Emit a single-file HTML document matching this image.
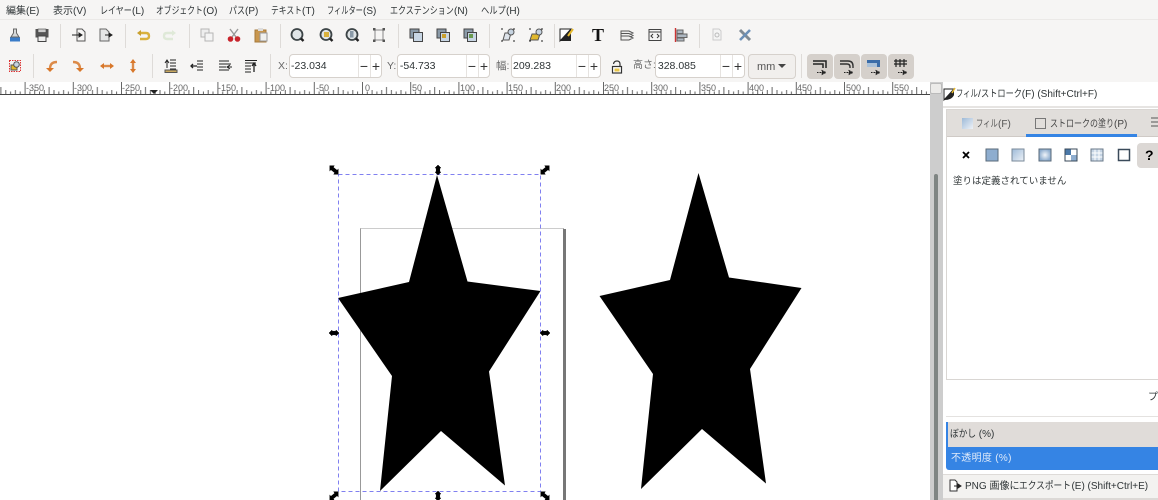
<!DOCTYPE html>
<html lang="ja"><head><meta charset="utf-8"><title>Inkscape</title>
<style>
html{background:#f6f5f4}
html,body{margin:0;padding:0;width:1158px;height:500px;overflow:hidden}
body{position:relative;background:#f6f5f4;font-family:"Liberation Sans","Noto Sans CJK JP",sans-serif;font-size:10px;color:#2e3436;filter:blur(.35px)}
.t{position:absolute;white-space:nowrap;line-height:14px}
.t s{display:inline-block;text-decoration:none;transform-origin:0 50%;white-space:nowrap;vertical-align:top}
.b{position:absolute;box-sizing:border-box}
.e{position:absolute;top:54px;height:24px;box-sizing:border-box;background:#fff;border:1px solid #d6d1cc;border-radius:4px;font-size:10.5px;line-height:23px;padding-left:1px;color:#2e3436}
.e i{position:absolute;top:0;bottom:0;width:1px;background:#e6e3e0}
.e b{position:absolute;top:0;font-weight:400;font-size:14px;width:12px;text-align:center;color:#333}
.tb{position:absolute;top:54px;width:26px;height:25px;background:#d5d0cb;border-radius:4px}
.l{font-size:10.5px;color:#666;top:59px}
.r{font-size:9px;color:#666;top:82px;line-height:12px}
svg{position:absolute;left:0;top:0}
</style></head><body>

<div class="t" style="left:6px;top:5px">編集(E)</div>
<div class="t" style="left:53px;top:5px">表示(V)</div>
<div class="t" style="left:100px;top:5px"><s style="width:32px;transform:scaleX(.8)">レイヤー</s>(L)</div>
<div class="t" style="left:156px;top:5px"><s style="width:47px;transform:scaleX(.78)">オブジェクト</s>(O)</div>
<div class="t" style="left:229px;top:5px"><s style="width:16px;transform:scaleX(.8)">パス</s>(P)</div>
<div class="t" style="left:271px;top:5px"><s style="width:31px;transform:scaleX(.78)">テキスト</s>(T)</div>
<div class="t" style="left:327px;top:5px"><s style="width:36px;transform:scaleX(.72)">フィルター</s>(S)</div>
<div class="t" style="left:390px;top:5px"><s style="width:64px;transform:scaleX(.8)">エクステンション</s>(N)</div>
<div class="t" style="left:481px;top:5px"><s style="width:25px;transform:scaleX(.83)">ヘルプ</s>(H)</div>
<div class="b" style="left:0;top:19px;width:1158px;height:1px;background:#ebe9e7"></div>

<div class="t l" style="left:278px">X:</div>
<div class="e" style="left:289px;width:93px">-23.034<i style="left:68px"></i><i style="left:80px"></i><b style="left:68px">−</b><b style="left:80px">+</b></div>
<div class="t l" style="left:387px">Y:</div>
<div class="e" style="left:397px;width:93px">&#8202;-54.733<i style="left:68px"></i><i style="left:80px"></i><b style="left:68px">−</b><b style="left:80px">+</b></div>
<div class="t l" style="left:496px">幅:</div>
<div class="e" style="left:511px;width:90px">209.283<i style="left:64px"></i><i style="left:76px"></i><b style="left:64px">−</b><b style="left:76px">+</b></div>
<div class="t l" style="left:633px;font-size:10px">高さ:</div>
<div class="e" style="left:655px;width:90px">&#8202;328.085<i style="left:64px"></i><i style="left:76px"></i><b style="left:64px">−</b><b style="left:76px">+</b></div>
<div class="b" style="left:748px;top:54px;width:48px;height:25px;background:#f1efed;border:1px solid #d6d1cc;border-radius:4px;font-size:11px;line-height:24px;padding-left:8px;color:#555">mm</div>
<div class="tb" style="left:807px"></div>
<div class="tb" style="left:834px"></div>
<div class="tb" style="left:861px"></div>
<div class="tb" style="left:888px"></div>

<!-- ruler -->
<div class="b" style="left:0;top:82px;width:930px;height:13px;background:#fff;overflow:hidden"></div>
<div class="t r" style="left:26px">-350</div>
<div class="t r" style="left:74px">-300</div>
<div class="t r" style="left:122px">-250</div>
<div class="t r" style="left:170px">-200</div>
<div class="t r" style="left:218px">-150</div>
<div class="t r" style="left:267px">-100</div>
<div class="t r" style="left:316px">-50</div>
<div class="t r" style="left:365px">0</div>
<div class="t r" style="left:412px">50</div>
<div class="t r" style="left:460px">100</div>
<div class="t r" style="left:508px">150</div>
<div class="t r" style="left:556px">200</div>
<div class="t r" style="left:604px">250</div>
<div class="t r" style="left:653px">300</div>
<div class="t r" style="left:701px">350</div>
<div class="t r" style="left:749px">400</div>
<div class="t r" style="left:797px">450</div>
<div class="t r" style="left:846px">500</div>
<div class="t r" style="left:894px">550</div>

<!-- canvas -->
<div class="b" style="left:0;top:95px;width:930px;height:405px;background:#fff"></div>
<!-- scrollbar -->
<div class="b" style="left:930px;top:82px;width:13px;height:418px;background:#cdcdcd"></div>
<div class="b" style="left:934px;top:174px;width:4px;height:326px;background:#7f8583;border-radius:2px 2px 0 0"></div>
<div class="b" style="left:930px;top:83px;width:12px;height:11px;background:#ecebe9;border:1px solid #bbb;border-radius:2px"></div>

<!-- panel -->
<div class="b" style="left:943px;top:82px;width:215px;height:418px;background:#fff"></div>
<div class="t" style="left:956px;top:88px;font-size:10px"><s style="width:22px;transform:scaleX(.73)">フィル</s>/<s style="width:41px;transform:scaleX(.82)">ストローク</s>(F) (Shift+Ctrl+F)</div>
<div class="b" style="left:943px;top:106px;width:215px;height:2px;background:#e6e4e2"></div>
<div class="b" style="left:946px;top:109px;width:212px;height:271px;border:1px solid #d9d6d3;border-right:0;background:#fff"></div>
<div class="b" style="left:947px;top:110px;width:211px;height:27px;background:#e1dedb;border-bottom:1px solid #cfcac6"></div>
<div class="b" style="left:1026px;top:134px;width:111px;height:3px;background:#3584e4"></div>
<div class="t" style="left:976px;top:118px;color:#555"><s style="width:22px;transform:scaleX(.73)">フィル</s>(F)</div>
<div class="t" style="left:1050px;top:118px;color:#444"><s style="width:64px;transform:scaleX(.8)">ストロークの塗り</s>(P)</div>
<div class="b" style="left:1137px;top:143px;width:21px;height:25px;background:#dcd8d5;border-radius:4px 0 0 4px"></div>
<div class="t" style="left:1145px;top:148px;font-size:14px;font-weight:700;color:#000">?</div>
<div class="t" style="left:953px;top:175px;font-size:9.5px">塗りは定義されていません</div>
<div class="t" style="left:1148px;top:391px;font-size:10px">プ</div>
<div class="b" style="left:946px;top:416px;width:212px;height:1px;background:#e4e2e0"></div>
<div class="b" style="left:946px;top:422px;width:212px;height:25px;background:#e0dcd9;border-left:2px solid #3584e4"></div>
<div class="t" style="left:950px;top:428px"><s style="width:26px;transform:scaleX(.87)">ぼかし</s> (%)</div>
<div class="b" style="left:946px;top:447px;width:212px;height:23px;background:#3584e4;border-radius:0 0 0 3px"></div>
<div class="t" style="left:951px;top:452px;color:#dfeafa;letter-spacing:.3px">不透明度 (%)</div>
<div class="b" style="left:943px;top:474px;width:215px;height:24px;background:#f3f2f0;border-top:1px solid #dedbd8"></div>
<div class="b" style="left:943px;top:498px;width:215px;height:2px;background:#dcd9d6"></div>
<div class="t" style="left:965px;top:480px;font-size:10px">PNG 画像に<s style="width:52px;transform:scaleX(.87)">エクスポート</s>(E) (Shift+Ctrl+E)</div>

<svg width="1158" height="500" viewBox="0 0 1158 500" xmlns="http://www.w3.org/2000/svg">
<defs>
<linearGradient id="gf" x1="0" y1="0" x2="1" y2="1"><stop offset="0" stop-color="#9dbad8"/><stop offset="1" stop-color="#eef2f7"/></linearGradient>
<radialGradient id="gr"><stop offset="0" stop-color="#f0f4f9"/><stop offset="1" stop-color="#8eadcf"/></radialGradient>
<pattern id="rul" x="24.6" y="82" width="48.2" height="13" patternUnits="userSpaceOnUse">
<path d="M.5 0V12M10.1 8V12M19.7 8V12M29.4 8V12M39 8V12M48.7 8V12" stroke="#666" stroke-width="1" fill="none"/>
<path d="M5.3 9.500V12M14.900 9.500V12M24.500 5V12M34.200 9.500V12M43.800 9.500V12" stroke="#666" stroke-width="1" fill="none"/>
</pattern>
<g id="mag"><circle cx="0" cy="-.5" r="5.500" fill="#dfe4e6" stroke="#3c4446" stroke-width="1.800"/><path d="M4 3.500L6.500 6" stroke="#222" stroke-width="2.400"/></g>
<g id="ord"><rect x="-6" y="-6" width="9" height="9" fill="#8a9aa8" stroke="#444"/><rect x="-2.500" y="-2.500" width="9" height="9" fill="#c8d6e4" stroke="#444"/></g>
<g id="tog"><path d="M-7 -5H6V2M-7 -2H3V2" fill="none" stroke="#222" stroke-width="1.500"/><path d="M-3 6.500H4M2 4.500L6 6.500L2 8.500Z" stroke="#222" fill="#222" stroke-dasharray="1.500 1"/></g>
<g id="ha"><path transform="scale(.78)" d="M-5 -5H-.5L-1.500 -3.500L4 1L5 0V5H.5L1.500 3.500L-4 -1L-5 0Z" fill="#000" stroke="#000" stroke-width="1.400"/></g>
<g id="hb"><path transform="scale(.78)" d="M-5 5H-.5L-1.500 3.500L4 -1L5 0V-5H.5L1.500 -3.500L-4 1L-5 0Z" fill="#000" stroke="#000" stroke-width="1.400"/></g>
<g id="hv"><path d="M0 -5L3 -2H1.800V2H3L0 5L-3 2H-1.800V-2H-3Z" fill="#000" stroke="#000" stroke-width=".5"/></g>
<g id="hh"><path d="M-5 0L-2 -3V-1.800H2V-3L5 0L2 3V1.800H-2V3Z" fill="#000" stroke="#000" stroke-width=".5"/></g>
</defs>

<!-- ruler ticks -->
<rect x="0" y="82" width="930" height="12" fill="url(#rul)"/>
<rect x="0" y="94" width="930" height="1" fill="#444"/>
<path d="M150 90H158L154 94Z" fill="#222"/>

<!-- page -->
<rect x="360.500" y="228.500" width="203" height="290" fill="#fff" stroke="#999"/>
<rect x="360.500" y="228" width="203" height="1" fill="#ccc"/>
<rect x="563" y="229" width="3" height="271" fill="#777"/>

<!-- stars -->
<path d="M437 175L467.500 281.500L540.500 291L489 371.500L505 485.500L441 431L380 491L392 376L338 298L409 282Z" fill="#000"/>
<path d="M698.500 173L729 277.500L801.500 288L750 369L766 483.500L702 429L641 489L653 374L599.500 296L670 280Z" fill="#000"/>

<!-- selection -->
<rect x="338.500" y="174.500" width="202" height="317" fill="none" stroke="#8080f0" stroke-dasharray="4 3"/>
<use href="#ha" x="334" y="170"/><use href="#hb" x="545" y="170"/><use href="#hv" x="438" y="170"/>
<use href="#hh" x="334" y="333"/><use href="#hh" x="545" y="333"/>
<use href="#hb" x="334" y="496"/><use href="#hv" x="438" y="496"/><use href="#ha" x="545" y="496"/>

<!-- separators -->
<path d="M60.500 24V48M125.500 24V48M189.500 24V48M280.500 24V48M398.500 24V48M489.500 24V48M554.500 24V48M699.500 24V48M33.500 54V78M152.500 54V78M270.500 54V78M801.500 54V78" stroke="#dedbd8"/>

<!-- row 1 -->
<g transform="translate(15,35)"><rect x="-5" y="2" width="10" height="4.500" fill="#3a7cc8"/><path d="M-1.500 -6H1.500V-2L4 2H-4L-1.500 -2Z" fill="#d6d8d8" stroke="#666"/></g>
<g transform="translate(42,35)"><path d="M-6.500 -6H6.500V2.500H-6.500Z" fill="#555"/><rect x="-4" y="-6" width="8" height="3.500" fill="#ccc" stroke="#444" stroke-width=".6"/><rect x="-4" y="1" width="8" height="5.500" fill="#eee" stroke="#444"/></g>
<g transform="translate(79,35)"><path d="M-2 -6H3L6 -3V6H-2Z" fill="#f6f5f4" stroke="#555"/><path d="M-7 0H2M0 -2L3 0L0 2Z" stroke="#222" fill="#222"/></g>
<g transform="translate(105,35)"><path d="M-5 -6H1L4 -3V6H-5Z" fill="#e6e6e6" stroke="#666"/><path d="M0 0H6M4 -2L7 0L4 2Z" stroke="#222" fill="#222"/></g>
<g transform="translate(143,35)"><path d="M-3 -2H3Q6 -2 6 1Q6 4 3 4H-3" fill="none" stroke="#d9b13c" stroke-width="2.400"/><path d="M-6 -2L-2 -5V1Z" fill="#c9a02e"/></g>
<g transform="translate(170,35)"><path d="M3 -2H-3Q-6 -2 -6 1Q-6 4 -3 4H3" fill="none" stroke="#dfe9d8" stroke-width="2.400"/><path d="M6 -2L2 -5V1Z" fill="#dfe9d8"/></g>
<g transform="translate(207,35)"><rect x="-6" y="-6" width="8" height="8" fill="#eee" stroke="#b5b5b5"/><rect x="-2" y="-2" width="8" height="8" fill="#f4f4f4" stroke="#b5b5b5"/></g>
<g transform="translate(234,35)"><path d="M-4 -6L2 2M4 -6L-2 2" stroke="#999" stroke-width="1.400"/><circle cx="-3.500" cy="4" r="2.800" fill="#c8242c"/><circle cx="3.500" cy="4" r="2.800" fill="#c8242c"/></g>
<g transform="translate(261,35)"><rect x="-6" y="-5" width="11" height="12" fill="#c9974e" stroke="#a5793a"/><rect x="-1" y="-2" width="7" height="8" fill="#f0f0ee" stroke="#999"/><rect x="-3" y="-7" width="5" height="3" fill="#ddd"/></g>
<use href="#mag" x="297" y="35"/><use href="#mag" x="326" y="35"/><rect x="324" y="32" width="5" height="5" fill="#d9b13c"/><use href="#mag" x="352" y="35"/><rect x="350" y="31" width="3.500" height="6.500" fill="#8a9aa8"/>
<g transform="translate(379,35)"><rect x="-4" y="-5" width="8" height="10" fill="none" stroke="#888"/><path d="M-6 -7h2.500v2.500h-2.500zM3.500 -7h2.500v2.500h-2.500zM-6 4.500h2.500v2.500h-2.500zM3.500 4.500h2.500v2.500h-2.500z" fill="#555"/></g>
<use href="#ord" x="416" y="35"/><use href="#ord" x="443" y="35"/><rect x="442" y="34" width="4" height="4" fill="#c9a02e"/><use href="#ord" x="470" y="35"/><rect x="469" y="34" width="4" height="4" fill="#6a9a50"/>
<g transform="translate(508,35)"><path d="M-3 -2H3L1 5H-5Z" fill="#dde3ea" stroke="#555"/><circle cx="3" cy="-3" r="3" fill="#c6d3e0" stroke="#555"/><path d="M-7 -6h2M5 -6h2M-7 6h2M5 6h2" stroke="#222"/></g>
<g transform="translate(536,35)"><path d="M-4 -1H4L2 5H-6Z" fill="#e0b82e" stroke="#555"/><circle cx="3" cy="-3" r="3" fill="#c6d3e0" stroke="#555"/><path d="M-7 -6h2M5 -6h2M-7 6h2M5 6h2" stroke="#222"/></g>
<g transform="translate(566,35)"><path d="M-6 -6H5L-6 6Z" fill="#fff" stroke="#222"/><path d="M-6 6L5 -6V6Z" fill="#222"/><path d="M2 1L7 -6" stroke="#e6b92e" stroke-width="2"/></g>
<text x="592" y="41" font-family="Liberation Serif,serif" font-size="18" font-weight="700" fill="#111">T</text>
<g transform="translate(627,35)" fill="#eee" stroke="#555"><path d="M-6 -4H2L6 -2L2 0H-6Z"/><path d="M-6 -1.500H2L6 .5L2 2.500H-6Z"/><path d="M-6 1H2L6 3L2 5H-6Z"/></g>
<g transform="translate(655,35)"><rect x="-6" y="-5.500" width="12" height="11" fill="#f4f4f4" stroke="#444"/><path d="M-6 -3H6" stroke="#444"/><path d="M-2 -1L-4 1L-2 3M2 -1L4 1L2 3" fill="none" stroke="#333"/></g>
<g transform="translate(681,35)"><path d="M-5.500 -7V7" stroke="#c33" stroke-width="1.400"/><rect x="-4" y="-5" width="6" height="3.500" fill="#aeb8c2" stroke="#666"/><rect x="-4" y="-1" width="10" height="3.500" fill="#aeb8c2" stroke="#666"/><rect x="-4" y="3" width="7" height="3" fill="#aeb8c2" stroke="#666"/></g>
<g transform="translate(717,35)"><path d="M-4 -6H2L4 -4V5H-4Z" fill="#f4f4f4" stroke="#ccc"/><circle cx="0" cy="0" r="2" fill="none" stroke="#bbb"/></g>
<g transform="translate(745,35)"><path d="M-5 -5L5 5" stroke="#7f8a94" stroke-width="3"/><path d="M5 -5L-5 5" stroke="#6c90b8" stroke-width="2.600"/></g>

<!-- row 2 -->
<g transform="translate(15,66)"><rect x="-5.500" y="-5.500" width="11" height="11" fill="none" stroke="#d33" stroke-dasharray="1.500 1"/><rect x="-4" y="-1" width="6" height="5" fill="#e0b82e" stroke="#555"/><circle cx="1.500" cy="-1.500" r="2.800" fill="#c6d3e0" stroke="#555"/></g>
<g fill="none" stroke="#dc8a48" stroke-width="2.400">
<path d="M6 -4Q-1 -4 -1 3" transform="translate(51,66)"/><path d="M-6 -4Q1 -4 1 3" transform="translate(79,66)"/><path d="M-4 0H4" transform="translate(107,66)"/><path d="M0 -4V4" transform="translate(133,66)"/></g>
<g fill="#d8772a">
<path d="M-5 2H3L-1 6Z" transform="translate(51,66)"/><path d="M-3 2H5L1 6Z" transform="translate(79,66)"/>
<path d="M-7 0L-3 -3V3ZM7 0L3 -3V3Z" transform="translate(107,66)"/><path d="M0 -7L-3 -3H3ZM0 7L-3 3H3Z" transform="translate(133,66)"/></g>
<g transform="translate(171,66)" stroke="#222"><path d="M-4 -6V2M-6 -3L-4 -6L-2 -3" fill="none"/><path d="M-1 -6H5M-1 -3H5M-1 0H5M-1 3H5" /><rect x="-6" y="4" width="12" height="2.500" fill="#c9a85e" stroke="#555"/></g>
<g transform="translate(198,66)" stroke="#222"><path d="M-1 -5H5M-1 -2H5M-1 4H5M-1 1H5" /><path d="M-7 0H-1M-5 -2L-7 0L-5 2" fill="none" stroke-width="1.300"/></g>
<g transform="translate(225,66)" stroke="#222"><path d="M-6 -5H4M-6 -2H6M-6 1H1M-6 4H4"/><path d="M2 1H7M5 -1L2 1L5 3" fill="none"/></g>
<g transform="translate(251,66)" stroke="#222"><path d="M-6 -5.500H6M-6 -3H5M-6 0H0M-6 3H0M-6 6H0"/><path d="M3 6V-2M1 0L3 -3L5 0" fill="none" stroke-width="1.300"/></g>
<path d="M0 0H8L4 4Z" transform="translate(778,64)" fill="#444"/>
<g transform="translate(617,67)"><rect x="-4.500" y="-.5" width="9" height="6.500" fill="#fff" stroke="#333" stroke-width="1.200"/><path d="M-3.500 -3Q-3 -6 0 -6Q3 -6 3 -3V-.5" fill="none" stroke="#333" stroke-width="1.200"/><rect x="-2.500" y="1.500" width="5" height="3" fill="#e8c64a"/></g>
<use href="#tog" x="820" y="66"/>
<g transform="translate(847,66)"><path d="M-7 -5H1Q6 -5 6 0V2M-7 -2H0Q3 -2 3 1V2" fill="none" stroke="#333" stroke-width="1.400"/><path d="M-3 6.500H4M2 4.500L6 6.500L2 8.500Z" stroke="#222" fill="#222" stroke-dasharray="1.500 1"/></g>
<g transform="translate(874,66)"><rect x="-7" y="-6" width="13" height="7" fill="#3a6ca8"/><rect x="-7" y="-3" width="10" height="4" fill="#a9c0d8"/><path d="M-3 6.500H4M2 4.500L6 6.500L2 8.500Z" stroke="#222" fill="#222" stroke-dasharray="1.500 1"/></g>
<g transform="translate(901,66)"><path d="M-7 -5H6M-7 -2H6M-5 -7V1M-1 -7V1M3 -7V1" stroke="#222" stroke-width="1.200"/><path d="M-3 6.500H4M2 4.500L6 6.500L2 8.500Z" stroke="#222" fill="#222" stroke-dasharray="1.500 1"/></g>

<!-- panel icons -->
<g transform="translate(949,94)"><path d="M-5 -5H5L-5 6Z" fill="#fff" stroke="#222"/><path d="M-5 6L5 -5V1Q3 6 -5 6Z" fill="#222"/><path d="M3 -1L6 -6" stroke="#e6b92e" stroke-width="1.500"/></g>
<rect x="962" y="118" width="11" height="11" fill="url(#gf)"/>
<rect x="1035.500" y="118.500" width="10" height="10" fill="none" stroke="#777"/>
<path d="M1151 118H1158M1151 122H1158M1151 126H1158" stroke="#555"/>
<path d="M963 152L969 158M969 152L963 158" stroke="#000" stroke-width="1.800"/>
<g transform="translate(992,155)"><rect x="-6" y="-6" width="12" height="12" fill="#8eadcf" stroke="#5a6a7a"/></g>
<g transform="translate(1018,155)"><rect x="-6" y="-6" width="12" height="12" fill="url(#gf)" stroke="#7a8a9a"/></g>
<g transform="translate(1045,155)"><rect x="-6" y="-6" width="12" height="12" fill="url(#gr)" stroke="#5a6a7a"/></g>
<g transform="translate(1071,155)"><rect x="-6" y="-6" width="12" height="12" fill="#fff" stroke="#3a4a5a"/><rect x="-5.500" y="-5.500" width="5.500" height="5.500" fill="#4a78a8"/><rect x="0" y="0" width="5.500" height="5.500" fill="#8eadcf"/></g>
<g transform="translate(1097,155)"><rect x="-6" y="-6" width="12" height="12" fill="#c5d4e4" stroke="#6a7a8a"/><path d="M-2 -5.500V5.500M2 -5.500V5.500M-5.500 -2H5.500M-5.500 2H5.500" stroke="#fff"/></g>
<g transform="translate(1124,155)"><rect x="-5.500" y="-5.500" width="11" height="11" fill="#fff" stroke="#3a4a5a" stroke-width="1.500"/></g>
<g transform="translate(954,486)"><path d="M-4 -6H1L3 -4V5H-4Z" fill="#fff" stroke="#333"/><path d="M0 0H6M4 -2L7 0L4 2Z" fill="#222" stroke="#222"/></g>
</svg>
</body></html>
